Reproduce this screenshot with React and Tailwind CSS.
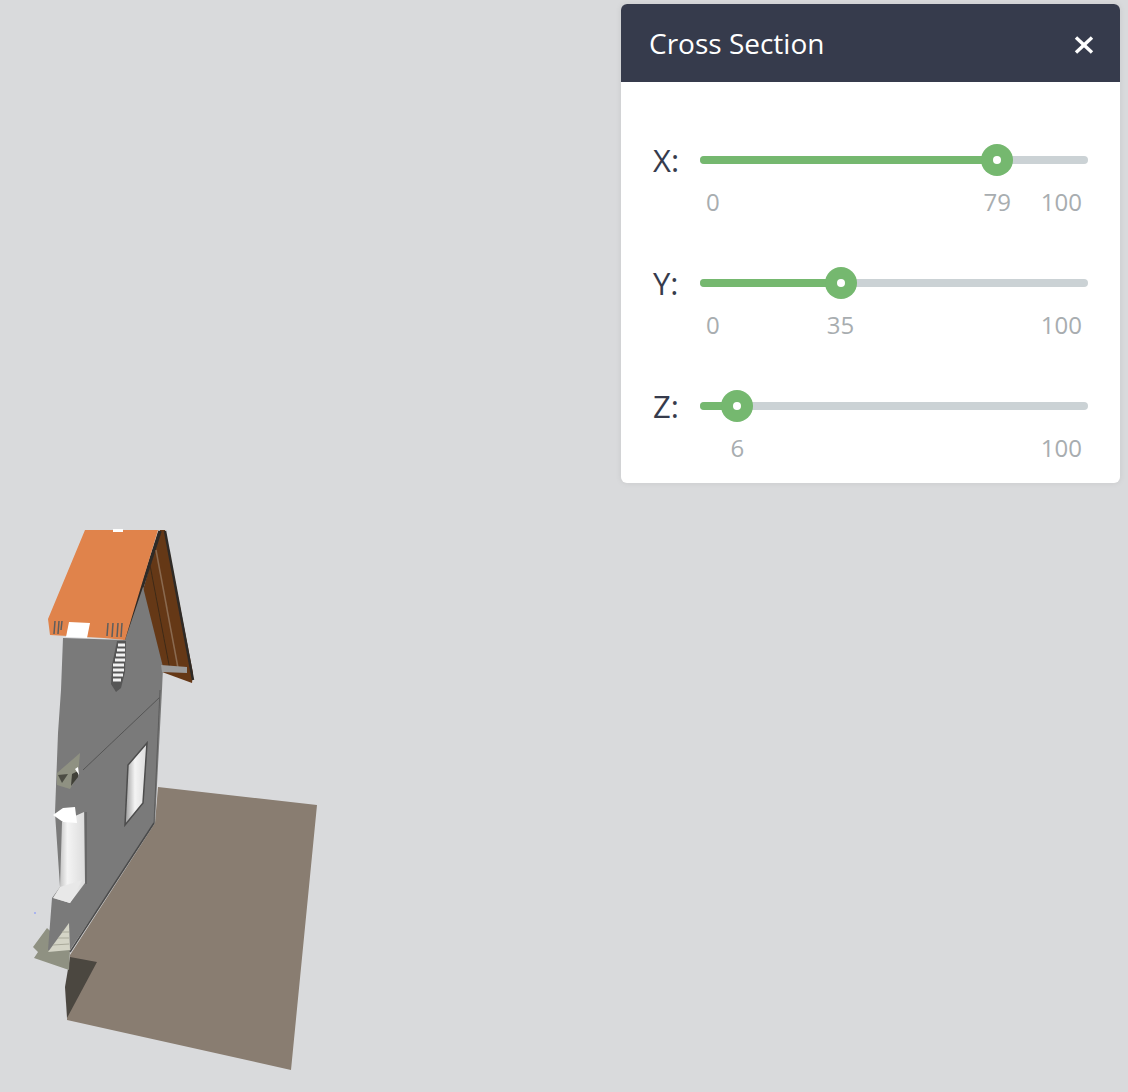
const sliders = [
  { label: 'X:', value: 79 },
  { label: 'Y:', value: 35 },
  { label: 'Z:', value: 6 },
];

function Slider({ label, value }) {
  const center = 16 + value * 3.56;
  const hideZero = value < 10;

  return (
    <div className="flex h-[123px] items-start pl-[32px] pr-[32px]">
      <span className="w-[47px] text-[31px] leading-[38px] text-[#363b4c]">{label}</span>
      <div className="relative flex-1">
        <div className="relative mt-[15px] h-2 rounded-full bg-[#cbd2d5]">
          <div className="h-2 rounded-full bg-[#75b86f]" style={{ width: center }} />
          <div
            className="absolute top-[-12px] flex h-8 w-8 -translate-x-1/2 items-center justify-center rounded-full bg-[#75b86f]"
            style={{ left: center }}
          >
            <div className="h-2 w-2 rounded-full bg-white" />
          </div>
        </div>
        <div className="relative mt-[22px] flex h-8 justify-between px-[6px] text-[24px] leading-8 text-[#a8adb0]">
          <span className={hideZero ? 'invisible' : ''}>0</span>
          <span
            className="absolute top-0 -translate-x-1/2"
            style={{ left: center }}
          >
            {value}
          </span>
          <span>100</span>
        </div>
      </div>
    </div>
  );
}

function House() {
  return (
    <svg className="absolute inset-0" width="1128" height="1092" viewBox="0 0 1128 1092">
      <defs>
        <filter id="soft" x="-5%" y="-5%" width="110%" height="110%">
          <feGaussianBlur stdDeviation="0.7" />
        </filter>
        <linearGradient id="win" x1="0" y1="0" x2="1" y2="0">
          <stop offset="0" stopColor="#9a9a9a" />
          <stop offset="0.45" stopColor="#f4f4f4" />
          <stop offset="1" stopColor="#dcdcdc" />
        </linearGradient>
      </defs>
      <g filter="url(#soft)">
        {/* floor */}
        <polygon points="158,787 317,805 291,1070 67,1020 70,955 155,823" fill="#897d71" />
        <polygon points="70,957 97,962 67,1018 65,987" fill="#4b4640" />
        {/* steps */}
        <polygon points="47,928 33,947 38,952 34,958 69,970 70,950" fill="#8f9182" />
        {/* roof underside */}
        <polygon points="160,530 165,530 193,673 192,683 162,672 143,590" fill="#653819" />
        <polyline points="160,531 125,640" fill="none" stroke="#2f2a26" strokeWidth="3.5" />
        <polyline points="165,531 193,680" fill="none" stroke="#2f2a26" strokeWidth="2.5" />
        <polyline points="156,550 178,668" fill="none" stroke="#8a6a50" strokeWidth="1.5" />
        <polyline points="150,565 170,670" fill="none" stroke="#3f2a1a" strokeWidth="1" />
        {/* wall */}
        <polygon
          points="143,587 163,667 162,690 155,823 70,950 48,950 52,898 60,887 55,813 58,733 61,690 63,638 125,640"
          fill="#7a7a7a"
        />
        <polygon points="161,665 187,667 187,673 162,672" fill="#9c9c9c" />
        <line x1="160" y1="697" x2="83" y2="770" stroke="#555555" strokeWidth="1" />
        <line x1="160" y1="690" x2="154" y2="823" stroke="#5c5c5c" strokeWidth="1" />
        <line x1="154" y1="823" x2="70" y2="952" stroke="#4a4a4a" strokeWidth="1.5" />
        {/* roof */}
        <polygon points="85,530 158,530 125,640 104,638 50,635 48,619" fill="#e0834b" />
        <rect x="113" y="529" width="10" height="3" fill="#ffffff" />
        <polygon points="69,622 90,623 87,638 66,637" fill="#ffffff" />
        <g stroke="#5d5d5d" strokeWidth="1.5">
          <line x1="55" y1="621" x2="54" y2="634" />
          <line x1="59" y1="621" x2="58" y2="634" />
          <line x1="62" y1="621" x2="61" y2="630" />
          <line x1="108" y1="623" x2="107" y2="636" />
          <line x1="113" y1="623" x2="112" y2="637" />
          <line x1="118" y1="623" x2="117" y2="637" />
          <line x1="122" y1="623" x2="121" y2="637" />
        </g>
        {/* oval stairs */}
        <polygon points="117,641 126,641 125,672 121,688 116,692 111,684 112,665" fill="#565656" />
        <g stroke="#f2f2f2" strokeWidth="3">
          <line x1="118" y1="645" x2="125" y2="645" />
          <line x1="117" y1="650" x2="125" y2="650" />
          <line x1="116" y1="655" x2="125" y2="655" />
          <line x1="115" y1="660" x2="125" y2="660" />
          <line x1="113" y1="665" x2="124" y2="665" />
          <line x1="113" y1="670" x2="124" y2="670" />
          <line x1="113" y1="675" x2="123" y2="675" />
          <line x1="113" y1="680" x2="121" y2="680" />
        </g>
        {/* upper window */}
        <polygon points="147,743 128,765 125,825 143,803" fill="url(#win)" stroke="#4d4d4d" strokeWidth="1.5" />
        {/* olive ledge */}
        <polygon points="80,753 57,773 57,785 70,789 78,775" fill="#8f9182" />
        <polygon points="58,775 68,774 62,783" fill="#4d4e45" />
        <polygon points="72,774 78,771 78,777 71,786" fill="#3f3f38" />
        <polygon points="75,769 78,767 79,775" fill="#ffffff" />
        {/* lower window */}
        <polygon points="62,822 84,812 85,883 70,903 53,898 60,887" fill="url(#win)" />
        <polygon points="53,815 63,808 75,807 77,823 63,822" fill="#ffffff" />
        <polygon points="60,887 82,880 70,903 53,898" fill="#e8e8e8" />
        <line x1="86" y1="812" x2="86" y2="884" stroke="#555555" strokeWidth="1" />
        {/* stair triangle */}
        <polygon points="69,923 48,952 70,950" fill="#d4d4c6" />
        <g stroke="#a9a99a" strokeWidth="1">
          <line x1="62" y1="932" x2="69" y2="932" />
          <line x1="58" y1="938" x2="69" y2="938" />
          <line x1="53" y1="945" x2="69" y2="944" />
        </g>
        <rect x="34" y="912" width="2" height="2" fill="#aab4ee" />
      </g>
    </svg>
  );
}

export default function App() {
  return (
    <div className="relative h-[1092px] w-[1128px] overflow-hidden bg-[#d9dadc] font-['Open_Sans',sans-serif]">
      <House />
      <div className="absolute right-2 top-1 w-[499px] overflow-hidden rounded-md bg-white shadow-[0_0_6px_rgba(0,0,0,0.08)]">
        <div className="flex h-[78px] items-center justify-between pl-[28px] pr-[26px] bg-[#363b4c]">
          <h2 className="text-[28px] font-normal text-white">Cross Section</h2>
          <svg className="mt-1" width="20" height="20" viewBox="0 0 20 20" fill="none" stroke="#ffffff" strokeWidth="3.4">
            <line x1="2" y1="2.5" x2="18" y2="17.5" />
            <line x1="18" y1="2.5" x2="2" y2="17.5" />
          </svg>
        </div>
        <div className="h-[401px] pt-[59px]">
          {sliders.map((s) => (
            <Slider key={s.label} label={s.label} value={s.value} />
          ))}
        </div>
      </div>
    </div>
  );
}
